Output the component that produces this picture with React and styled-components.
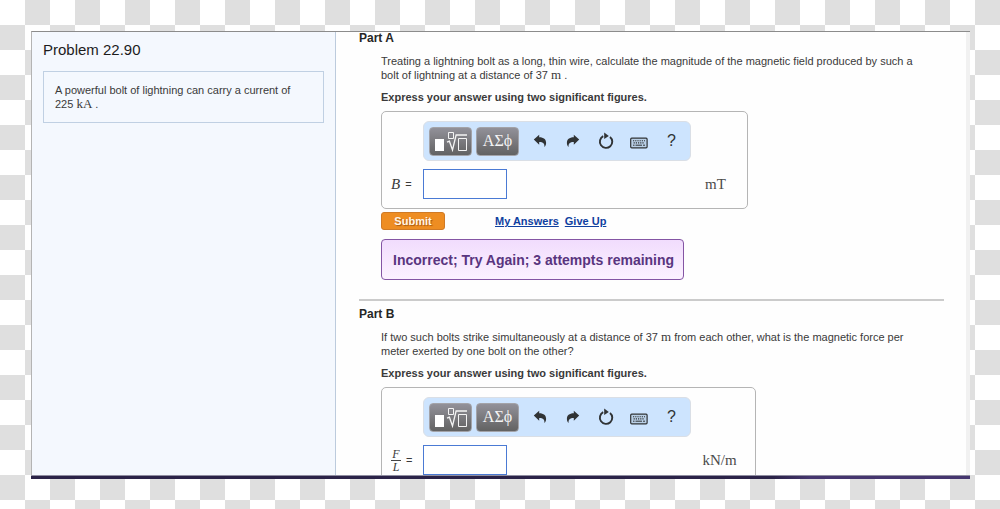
import React, { useId } from "react";
import styled, { createGlobalStyle } from "styled-components";

const GlobalStyle = createGlobalStyle`
  *, *::before, *::after { box-sizing: border-box; }
  body {
    margin: 0;
    font-family: "Liberation Sans", Arial, sans-serif;
    font-size: 11px;
    line-height: 14px;
    color: #3a3a3a;
    background: repeating-conic-gradient(#dfdfdf 0 25%, #fff 0 50%) 0 0 / 50px 50px;
  }
  h1, h2, p { margin: 0; }
`;

const Frame = styled.div`
  display: flex;
  flex-direction: column;
  height: 100vh;
  padding: 31px 30px 30px 31px;
`;

const Pane = styled.div`
  flex: 1;
  min-height: 0;
  display: flex;
  overflow: hidden;
  background: #fefefe;
  border-top: 1px solid #8c8c8c;
  border-left: 1px solid #b4b4b4;
  border-bottom: 1px solid #8f8da0;
`;

const Gutter = styled.div`
  flex: none;
  width: 4px;
  background: #f1f1f1;
`;

const Dock = styled.div`
  flex: none;
  height: 3px;
  background: linear-gradient(90deg, #2b2348 0 79%, #45366f 83%);
`;

const Sidebar = styled.aside`
  flex: none;
  width: 304px;
  padding: 9px 11px;
  background: #f4f8fe;
  border-right: 1px solid #bccbdd;
`;

const Title = styled.h1`
  font-size: 15px;
  line-height: 18px;
  font-weight: 400;
  color: #1c1c1c;
`;

const Intro = styled.p`
  margin-top: 12px;
  padding: 11px 24px 11px 11px;
  border: 1px solid #c0d0e3;
`;

const Main = styled.main`
  flex: 1;
  min-width: 0;
  padding: 0 22px 0 23px;
`;

const Part = styled.section`
  & + & {
    margin-top: 19px;
    padding-top: 7px;
    border-top: 2px solid #cbcbcb;
  }
`;

const PartTitle = styled.h2`
  font-size: 12px;
  line-height: 12px;
  color: #262626;
`;

const PartBody = styled.div`
  padding: 10px 13px 0 22px;
`;

const Instruction = styled.p`
  margin: 8px 0 7px;
  font-weight: 700;
`;

const Unit = styled.span`
  font-family: "Liberation Serif", "Times New Roman", serif;
  font-size: ${(p) => (p.$large ? "15px" : "13px")};
  line-height: 1;
`;

const AnswerBox = styled.form`
  display: grid;
  grid-template-columns: 32px 268px 1fr;
  row-gap: 8px;
  align-items: center;
  width: ${(p) => p.$width};
  max-width: 100%;
  padding: 9px 7px 9px 9px;
  border: 1px solid #b5b5b5;
  border-radius: 5px;
`;

const Toolbar = styled.div`
  grid-column: 2;
  display: flex;
  align-items: center;
  height: 40px;
  padding: 0 1px 0 5px;
  border: 1px solid #dadfe6;
  border-radius: 6px;
  background: #cde4fe;
`;

const PaletteButton = styled.button`
  display: flex;
  align-items: center;
  justify-content: center;
  width: 43px;
  height: 29px;
  margin-right: 4px;
  padding: 0;
  border: 1px solid #a3a3a8;
  border-radius: 4px;
  background: linear-gradient(#929199, #626262);
  color: #f4f4f4;
  font: 16px/20px "Liberation Serif", "Times New Roman", serif;
`;

const ToolButton = styled.button`
  display: flex;
  align-items: center;
  justify-content: center;
  width: 33px;
  height: 29px;
  padding: 0;
  border: 0;
  background: none;
  color: #303335;
  font: 16px/20px "Liberation Sans", Arial, sans-serif;
`;

const Variable = styled.label`
  grid-column: 1;
  display: flex;
  align-items: center;
  gap: 5px;
`;

const Symbol = styled.i`
  font-family: "Liberation Serif", "Times New Roman", serif;
  font-size: 15px;
`;

const Fraction = styled.span`
  display: flex;
  flex-direction: column;
  align-items: center;
  width: 10px;
  font: italic 12px/12px "Liberation Serif", "Times New Roman", serif;

  & > :first-child {
    width: 100%;
    text-align: center;
    border-bottom: 1px solid #444;
  }
`;

const AnswerInput = styled.input`
  display: block;
  width: 84px;
  height: 30px;
  padding: 0 6px;
  border: 1px solid #4a7ad4;
  border-radius: 0;
  background: #fff;
  outline: 0;
`;

const UnitCell = styled.div`
  text-align: center;
  color: #4a4a4a;
`;

const Actions = styled.div`
  display: flex;
  align-items: center;
  margin-top: 3px;
`;

const Submit = styled.button`
  width: 64px;
  height: 18px;
  margin-right: 50px;
  padding: 0;
  border: 1px solid #cf7a26;
  border-radius: 3px;
  background: #ee8d22;
  color: #fff6e8;
  font: 700 11px/14px "Liberation Sans", Arial, sans-serif;
  text-shadow: 1px 1px 1px #a85a10;
`;

const ActionLink = styled.a`
  margin-right: 6px;
  font-weight: 700;
  color: #1041a0;
`;

const Feedback = styled.div`
  width: fit-content;
  margin-top: 9px;
  padding: 11px 9px 10px 11px;
  border: 1px solid #8455a4;
  border-radius: 4px;
  background: linear-gradient(#f1dcfd, #fcf2ff);
  color: #59357f;
  font-size: 14px;
  line-height: 18px;
  font-weight: 700;
`;

const TemplateIcon = () => (
  <svg width="33" height="21" viewBox="0 0 33 21" fill="none" stroke="#f4f4f4">
    <path d="M1 8h9v12H1z" fill="#fff" stroke="none" />
    <path d="M14.5 1.5h5v6h-5z" />
    <path d="M13 11.2l2.4-1 3.1 8.8 3.6-15H33" strokeWidth="1.3" />
    <path d="M24.5 7.5h8v12h-8z" />
  </svg>
);

const BentArrow = ({ flip }) => (
  <svg width="14" height="14" viewBox="0 0 14 14" fill="currentColor">
    <path
      transform={flip ? "translate(14 0) scale(-1 1)" : undefined}
      d="M.8 5.4 6.2.7v2.6c4.6 0 6.9 2.2 6.9 5.6 0 1.7-.6 3-1.7 4.2.3-3.4-1.1-5-5.2-5v2.6z"
    />
  </svg>
);

const ResetIcon = () => (
  <svg width="16" height="18" viewBox="0 0 16 18" fill="none" stroke="currentColor">
    <path d="M5.2 4.2a6.2 6.2 0 1 0 6.8.7" strokeWidth="1.9" />
    <path d="M6.2.6v6.4l4.6-3z" fill="currentColor" stroke="none" />
  </svg>
);

const KeyboardIcon = () => (
  <svg width="18" height="16" viewBox="0 0 18 16" fill="none" stroke="currentColor">
    <rect x=".7" y="5.2" width="16.4" height="9.6" rx="1" fill="#b9cfe6" strokeWidth="1.2" />
    <path d="M3 7.7h12M3.6 9.9h11" strokeDasharray="1.2 1" strokeWidth="1.1" />
    <path d="M3 12.2h1.5M5.5 12.2h6.5M13 12.2h2" strokeWidth="1" />
  </svg>
);

function AnswerForm({ symbol, unit, width }) {
  const id = useId();
  return (
    <AnswerBox $width={width} onSubmit={(e) => e.preventDefault()}>
      <Toolbar role="toolbar" aria-label="Equation tools">
        <PaletteButton type="button" aria-label="Templates"><TemplateIcon /></PaletteButton>
        <PaletteButton type="button">ΑΣϕ</PaletteButton>
        <ToolButton type="button" aria-label="Undo"><BentArrow /></ToolButton>
        <ToolButton type="button" aria-label="Redo"><BentArrow flip /></ToolButton>
        <ToolButton type="button" aria-label="Reset"><ResetIcon /></ToolButton>
        <ToolButton type="button" aria-label="Keyboard shortcuts"><KeyboardIcon /></ToolButton>
        <ToolButton type="button">?</ToolButton>
      </Toolbar>
      <Variable htmlFor={id}>{symbol} =</Variable>
      <AnswerInput id={id} type="text" />
      <UnitCell><Unit $large>{unit}</Unit></UnitCell>
    </AnswerBox>
  );
}

export default function App() {
  return (
    <>
      <GlobalStyle />
      <Frame>
        <Pane>
          <Sidebar>
            <Title>Problem 22.90</Title>
            <Intro>
              A powerful bolt of lightning can carry a current of 225 <Unit>kA</Unit> .
            </Intro>
          </Sidebar>
          <Main>
            <Part>
              <PartTitle>Part A</PartTitle>
              <PartBody>
                <p>
                  Treating a lightning bolt as a long, thin wire, calculate the magnitude of the
                  magnetic field produced by such a bolt of lightning at a distance of
                  37 <Unit>m</Unit> .
                </p>
                <Instruction>Express your answer using two significant figures.</Instruction>
                <AnswerForm symbol={<Symbol>B</Symbol>} unit="mT" width="367px" />
                <Actions>
                  <Submit type="submit">Submit</Submit>
                  <ActionLink href="#answers">My Answers</ActionLink>
                  <ActionLink href="#give-up">Give Up</ActionLink>
                </Actions>
                <Feedback role="status">Incorrect; Try Again; 3 attempts remaining</Feedback>
              </PartBody>
            </Part>
            <Part>
              <PartTitle>Part B</PartTitle>
              <PartBody>
                <p>
                  If two such bolts strike simultaneously at a distance of 37 <Unit>m</Unit> from
                  each other, what is the magnetic force per meter exerted by one bolt on the other?
                </p>
                <Instruction>Express your answer using two significant figures.</Instruction>
                <AnswerForm
                  symbol={<Fraction><span>F</span><span>L</span></Fraction>}
                  unit="kN/m"
                  width="375px"
                />
              </PartBody>
            </Part>
          </Main>
          <Gutter />
        </Pane>
        <Dock />
      </Frame>
    </>
  );
}
